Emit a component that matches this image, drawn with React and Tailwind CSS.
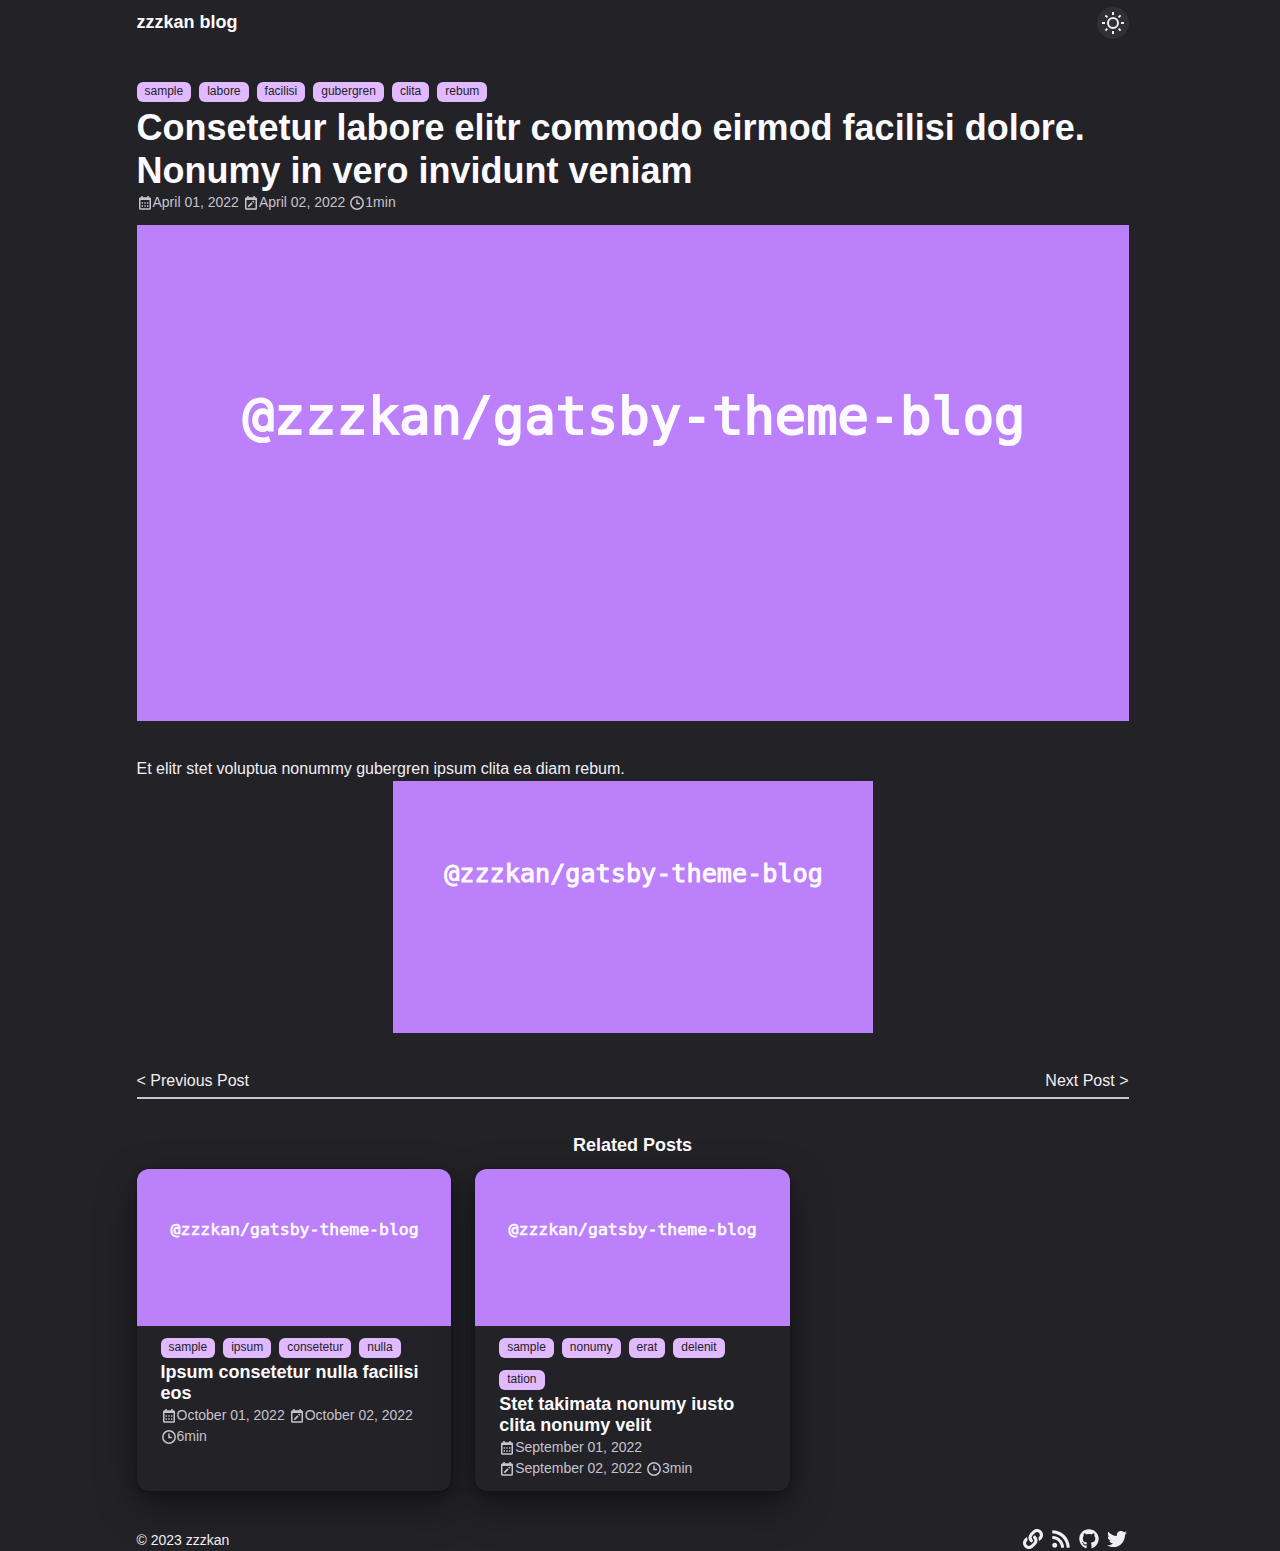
import React from "react";
import { FaLink, FaRss, FaGithub, FaTwitter } from "react-icons/fa";

function SunIcon() {
  return (
    <svg viewBox="0 0 24 24" className="size-6 fill-none stroke-current" strokeWidth="2" aria-hidden="true">
      <circle cx="12" cy="12" r="5" />
      <path d="M12 1v3M12 20v3M1 12h3M20 12h3M4.4 4.4l2 2M17.6 17.6l2 2M19.6 4.4l-2 2M6.4 17.6l-2 2" />
    </svg>
  );
}

function CalendarFrame({ children }) {
  return (
    <svg viewBox="0 0 16 16" className="size-4 fill-none stroke-current" strokeWidth="1.5" aria-hidden="true">
      <rect x="2.75" y="3" width="10.5" height="11" rx="0.8" />
      <path d="M2.5 4h11" strokeWidth="2" />
      <path d="M5 1v3M11 1v3" />
      {children}
    </svg>
  );
}

function PublishedIcon() {
  return (
    <CalendarFrame>
      <path d="M4.6 8h1.4M7.3 8h1.4M10 8h1.4M4.6 11h1.4M7.3 11h1.4M10 11h1.4" strokeWidth="1.3" />
    </CalendarFrame>
  );
}

function UpdatedIcon() {
  return (
    <CalendarFrame>
      <path d="M5.3 11.7l3.8-3.8M9.8 7.2l1-1" strokeWidth="1.7" />
    </CalendarFrame>
  );
}

function ClockIcon() {
  return (
    <svg viewBox="0 0 16 16" className="size-4 fill-none stroke-current" strokeWidth="1.5" aria-hidden="true">
      <circle cx="8" cy="8" r="6.2" />
      <path d="M8 4.6v3.8h3" />
    </svg>
  );
}

function Banner({ className }) {
  return (
    <svg
      viewBox="0 0 992 521"
      preserveAspectRatio="xMidYMin slice"
      role="img"
      aria-label="@zzzkan/gatsby-theme-blog"
      className={`relative block w-full bg-[#bb80fa] ${className}`}
    >
      <text
        x="497"
        y="209"
        textAnchor="middle"
        fontSize="52"
        strokeWidth="2"
        className="fill-[#fdfaff] stroke-[#fdfaff] font-['DejaVu_Sans_Mono',monospace]"
      >
        @zzzkan/gatsby-theme-blog
      </text>
    </svg>
  );
}

function Tags({ items }) {
  return (
    <ul className="flex flex-wrap gap-x-2 gap-y-3">
      {items.map((tag) => (
        <li key={tag} className="flex">
          <a href="#" className="h-5 rounded-md bg-[#e1b9ff] px-2 text-xs leading-[18px] text-[#232227]">
            {tag}
          </a>
        </li>
      ))}
    </ul>
  );
}

function Meta({ published, updated, minutes }) {
  return (
    <div className="flex flex-wrap gap-x-1 text-sm leading-[21px] text-[#c6c3cf]">
      <span className="flex items-center">
        <PublishedIcon />
        <time>{published}</time>
      </span>
      <span className="flex items-center">
        <UpdatedIcon />
        <time>{updated}</time>
      </span>
      <span className="flex items-center">
        <ClockIcon />
        {minutes}min
      </span>
    </div>
  );
}

function Card({ tags, title, ...meta }) {
  return (
    <article className="overflow-hidden rounded-xl bg-[#232227] shadow-[0_0_0_1px_rgba(0,0,0,0.1),0_5px_10px_rgba(0,0,0,0.2),0_15px_40px_rgba(0,0,0,0.4)]">
      <Banner className="aspect-[2/1]" />
      <div className="px-6 py-3">
        <Tags items={tags} />
        <h3 className="mt-1 mb-px text-lg leading-[21px] font-bold text-[#fcfbff]">
          <a href="#">{title}</a>
        </h3>
        <Meta {...meta} />
      </div>
    </article>
  );
}

const related = [
  {
    tags: ["sample", "ipsum", "consetetur", "nulla"],
    title: "Ipsum consetetur nulla facilisi eos",
    published: "October 01, 2022",
    updated: "October 02, 2022",
    minutes: 6,
  },
  {
    tags: ["sample", "nonumy", "erat", "delenit", "tation"],
    title: "Stet takimata nonumy iusto clita nonumy velit",
    published: "September 01, 2022",
    updated: "September 02, 2022",
    minutes: 3,
  },
];

const links = [
  { label: "Website", Icon: FaLink },
  { label: "RSS", Icon: FaRss },
  { label: "GitHub", Icon: FaGithub },
  { label: "Twitter", Icon: FaTwitter },
];

export default function App() {
  return (
    <div className="min-h-screen bg-[#232227] pr-[15px] font-['Liberation_Sans',Arial,sans-serif] text-[#f0eff3]">
      <div className="mx-auto max-w-5xl px-4">
        <header className="flex items-center justify-between pt-[7px] pb-[6px]">
          <a href="#" className="pb-[2px] text-lg leading-6 font-bold text-[#fcfbff]">
            zzzkan blog
          </a>
          <button
            type="button"
            aria-label="Toggle color theme"
            className="flex size-8 items-center justify-center rounded-full bg-[#313035]"
          >
            <SunIcon />
          </button>
        </header>

        <main>
          <article className="pt-[37px]">
            <Tags items={["sample", "labore", "facilisi", "gubergren", "clita", "rebum"]} />
            <h1 className="mt-1 text-4xl leading-[43px] font-bold text-[#fcfbff]">
              Consetetur labore elitr commodo eirmod facilisi dolore. Nonumy in vero invidunt veniam
            </h1>
            <Meta published="April 01, 2022" updated="April 02, 2022" minutes={1} />
            <Banner className="mt-3 aspect-[2/1]" />
            <p className="mt-9 text-base">
              Et elitr stet voluptua nonummy gubergren ipsum clita ea diam rebum.
            </p>
            <div className="mx-auto max-w-[480px]">
              <Banner className="aspect-[40/21]" />
            </div>
          </article>

          <nav className="mt-9 flex justify-between border-b-2 border-[#c9c6d3] pb-1 text-base">
            <a href="#">&lt; Previous Post</a>
            <a href="#">Next Post &gt;</a>
          </nav>

          <section className="mt-9">
            <h2 className="mb-[13px] text-center text-lg leading-[21px] font-bold text-[#fcfbff]">
              Related Posts
            </h2>
            <div className="grid grid-cols-3 gap-6">
              {related.map((post) => (
                <Card key={post.title} {...post} />
              ))}
            </div>
          </section>
        </main>

        <footer className="mt-[37px] flex items-center justify-between">
          <small className="pt-[2px] text-sm leading-5">© 2023 zzzkan</small>
          <div className="flex gap-2 pr-[2px]">
            {links.map(({ label, Icon }) => (
              <a key={label} href="#" aria-label={label}>
                <Icon className="size-5" />
              </a>
            ))}
          </div>
        </footer>
      </div>
    </div>
  );
}
